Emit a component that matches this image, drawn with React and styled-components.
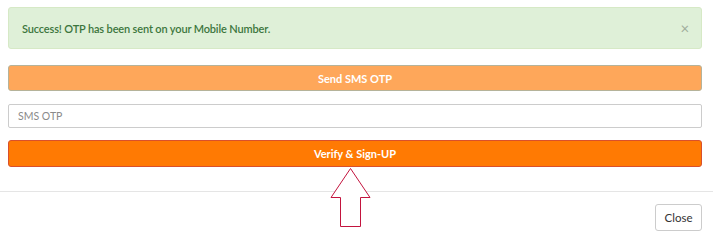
import React from 'react';
import styled, { createGlobalStyle } from 'styled-components';

const GlobalStyle = createGlobalStyle`
  html, body {
    margin: 0;
    padding: 0;
    background: #ffffff;
  }
  body {
    font-family: 'Lato', 'Liberation Sans', sans-serif;
    font-size: 11px;
    color: #333333;
  }
`;

const Modal = styled.div`
  position: relative;
  width: 713px;
  height: 243px;
  overflow: hidden;
`;

const ModalBody = styled.div`
  display: flex;
  flex-direction: column;
  padding: 7px 11px 24px 8px;
  border-bottom: 1px solid #e5e5e5;
`;

const Alert = styled.div`
  display: flex;
  align-items: center;
  justify-content: space-between;
  height: 42px;
  box-sizing: border-box;
  padding: 0 12px 0 13px;
  background: #dff0d8;
  border: 1px solid #d6e9c6;
  border-radius: 3px;
  color: #3c763d;
  font-size: 11px;
  font-weight: 600;
  letter-spacing: -0.15px;
  margin-bottom: 16px;
`;

const CloseX = styled.span`
  color: #9fae9c;
  font-size: 15px;
  font-weight: 400;
  line-height: 1;
`;

const Button = styled.button`
  height: ${(p) => p.$h}px;
  box-sizing: border-box;
  width: 100%;
  border-radius: 3px;
  border: 1px solid ${(p) => p.$border};
  background: ${(p) => p.$bg};
  color: #ffffff;
  font-family: inherit;
  font-size: 11px;
  font-weight: 700;
  cursor: pointer;
  margin-bottom: ${(p) => p.$mb}px;
  padding: 0;
`;

const Input = styled.input`
  height: 24px;
  box-sizing: border-box;
  width: 100%;
  border: 1px solid #cccccc;
  border-radius: 2px;
  padding: 0 9px;
  font-family: inherit;
  font-size: 10.5px;
  margin-bottom: 12px;

  &::placeholder {
    color: #8a8a8a;
  }
`;

const Footer = styled.div`
  display: flex;
  justify-content: flex-end;
  padding: 12px 11px 0 0;
`;

const CloseButton = styled.button`
  height: 27px;
  width: 47px;
  box-sizing: border-box;
  border: 1px solid #cccccc;
  border-radius: 3px;
  background: #ffffff;
  color: #333333;
  font-family: inherit;
  font-size: 11.5px;
  padding: 0;
`;

// red outline arrow pointing at the verify button
const Arrow = styled.svg`
  position: absolute;
  left: 330px;
  top: 168px;
`;

const App = () => (
  <>
    <GlobalStyle />
    <Modal>
      <ModalBody>
        <Alert>
          <span>Success! OTP has been sent on your Mobile Number.</span>
          <CloseX>×</CloseX>
        </Alert>
        <Button $h={26} $mb={13} $bg="#fea75a" $border="#b5b39a">
          Send SMS OTP
        </Button>
        <Input placeholder="SMS OTP" />
        <Button $h={27} $mb={0} $bg="#ff7a03" $border="#d9502c">
          Verify &amp; Sign-UP
        </Button>
      </ModalBody>
      <Footer>
        <CloseButton>Close</CloseButton>
      </Footer>
      <Arrow width="42" height="60" viewBox="0 0 42 60">
        <polygon
          points="20.5,0.5 1,29.5 10.5,29.5 10.5,58.5 30.5,58.5 30.5,29.5 40,29.5"
          fill="#ffffff"
          stroke="#c3143e"
          strokeWidth="1"
        />
      </Arrow>
    </Modal>
  </>
);

export default App;
